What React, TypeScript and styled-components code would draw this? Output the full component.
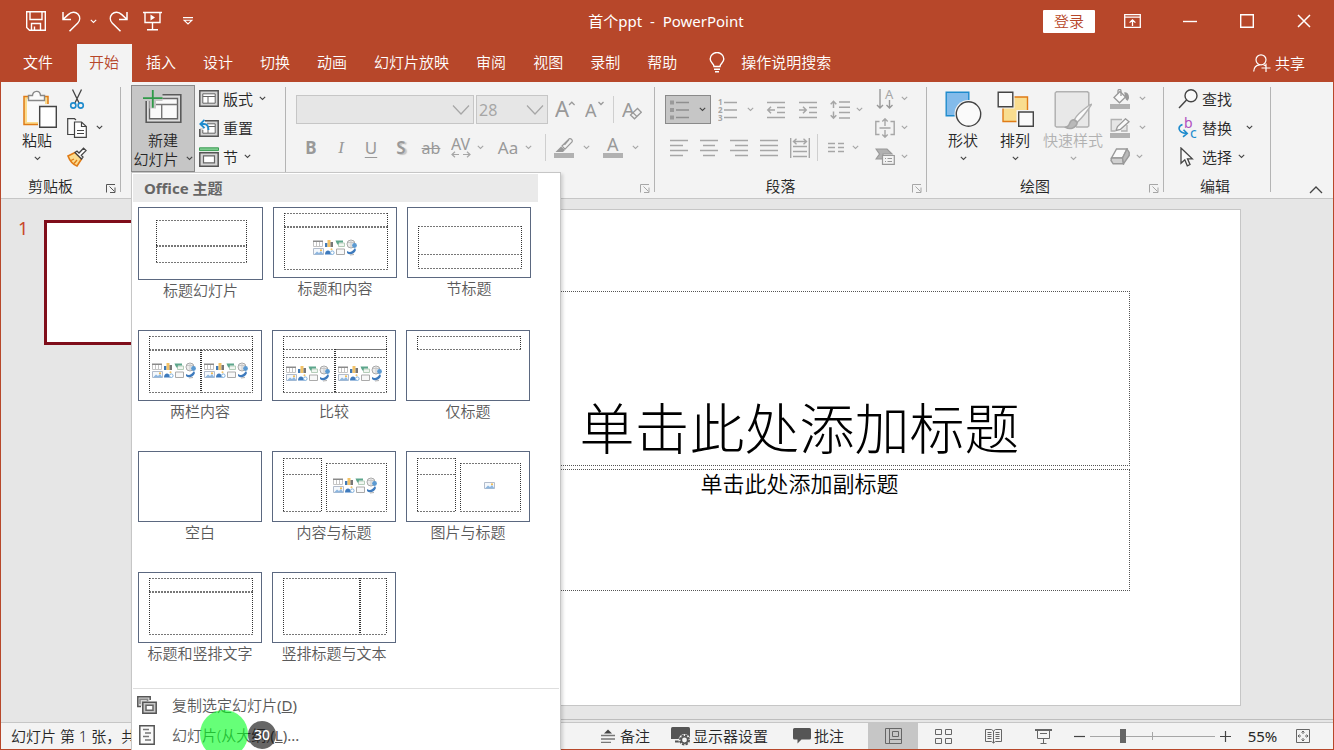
import React from "react";
import styled, { createGlobalStyle, css } from "styled-components";

const c = {
  brand: "#b7472a",
  brandDark: "#7f0d1a",
  ribbon: "#f3f3f3",
  canvas: "#e6e6e6",
  line: "#c6c6c6",
  text: "#262626",
  menuText: "#5a5a5a",
  icon: "#444444",
  off: "#a6a6a6",
  offText: "#b1b1b1",
  blue: "#1e8bcd",
  orange: "#e07b16",
};

const GlobalStyle = createGlobalStyle`
  *, *::before, *::after { box-sizing: border-box; }
  body {
    margin: 0;
    font: 15px/20px "Noto Sans", "Noto Sans CJK SC", sans-serif;
    font-weight: 350;
    color: ${c.text};
  }
  button, select, input {
    font: inherit;
    color: inherit;
    margin: 0;
    padding: 0;
    border: 0;
    background: none;
  }
  svg { display: block; flex: none; font-weight: 400; }
`;

const Window = styled.div`
  height: 100vh;
  display: flex;
  flex-direction: column;
  overflow: hidden;
  background: ${c.brand};
`;

/* ---------- title bar ---------- */

const TitleBar = styled.header`
  display: grid;
  grid-template-columns: 1fr auto 1fr;
  align-items: center;
  height: 42px;
  flex: none;
  padding-right: 2px;
  color: #fff;
`;

const QuickAccess = styled.div`
  display: flex;
  align-items: center;
  padding-left: 26px;
`;

const QuickButton = styled.button<{ $after: number }>`
  display: flex;
  margin-right: ${(p) => p.$after}px;
`;

const DocumentTitle = styled.div`
  white-space: pre;
  font-weight: 400;
`;

const WindowControls = styled.div`
  display: flex;
  justify-content: flex-end;
  align-items: center;
`;

const LoginButton = styled.button`
  width: 52px;
  height: 23px;
  margin-right: 9px;
  border-radius: 1px;
  background: #fff;
  color: ${c.brand};
`;

const WindowButton = styled.button`
  display: flex;
  align-items: center;
  justify-content: center;
  width: 57px;
  height: 40px;
`;

/* ---------- tabs ---------- */

const TabBar = styled.nav`
  display: flex;
  align-items: flex-end;
  height: 40px;
  flex: none;
  padding: 0 29px 0 11px;
  gap: 2px;
  color: #fff;
`;

const Tab = styled.button<{ $active?: boolean; $file?: boolean }>`
  height: 38px;
  padding: 0 13px 2px 12px;
  white-space: nowrap;
  ${(p) => p.$file && css`margin-right: 9px;`}
  ${(p) => p.$active && css`background: ${c.ribbon}; color: ${c.brand};`}
`;

const TellMe = styled.button`
  display: flex;
  align-items: center;
  gap: 16px;
  height: 38px;
  margin-left: 17px;
  padding-bottom: 2px;
  white-space: nowrap;
`;

const Share = styled.button`
  display: flex;
  align-items: center;
  gap: 4px;
  height: 38px;
  margin-left: auto;
`;

/* ---------- ribbon ---------- */

const Ribbon = styled.section`
  display: flex;
  flex: none;
  margin: 0 1px;
  height: 117px;
  border-bottom: 1px solid ${c.line};
  background: ${c.ribbon};
`;

const Group = styled.div<{ $width: number }>`
  display: flex;
  flex-direction: column;
  flex: none;
  width: ${(p) => p.$width}px;
  padding-top: 3px;
`;

const GroupBody = styled.div<{ $start: number; $gap?: number }>`
  display: flex;
  gap: ${(p) => p.$gap ?? 0}px;
  height: 90px;
  padding-left: ${(p) => p.$start}px;
`;

const GroupFooter = styled.div`
  display: flex;
  align-items: center;
  gap: 6px;
  height: 22px;
  padding-right: 4px;
`;

const GroupName = styled.span`
  flex: 1;
  text-align: center;
`;

const Launcher = styled.button`
  display: flex;
  padding-top: 4px;
`;

const GroupDivider = styled.div`
  width: 1px;
  flex: none;
  margin: 5px 0 6px;
  background: #b4b4b4;
`;

const BigButton = styled.button<{ $width: number; $pressed?: boolean; $off?: boolean }>`
  display: flex;
  flex-direction: column;
  align-items: center;
  width: ${(p) => p.$width}px;
  height: 87px;
  padding-top: 4px;
  border: 1px solid ${(p) => (p.$pressed ? "#8a8a8a" : "transparent")};
  background: ${(p) => (p.$pressed ? "#c6c6c6" : "none")};
  color: ${(p) => (p.$off ? c.offText : c.text)};
  white-space: nowrap;
`;

const BigButtonLine = styled.span`
  display: flex;
  align-items: center;
  justify-content: center;
  gap: 7px;
  height: 19px;
`;

const SmallColumn = styled.div`
  display: flex;
  flex-direction: column;
  align-items: flex-start;
  margin-top: -1px;
`;

const SmallButton = styled.button<{ $gap?: number }>`
  display: flex;
  align-items: center;
  gap: ${(p) => p.$gap ?? 6}px;
  height: 29px;
  white-space: nowrap;
`;

const SmallCaption = styled.span`
  display: flex;
  align-items: center;
  gap: 4px;
`;

const ToolRows = styled.div`
  display: flex;
  flex-direction: column;
  gap: 9px;
  padding-top: 10px;
`;

const ToolRow = styled.div<{ $gap?: number }>`
  display: flex;
  align-items: center;
  height: 29px;
  gap: ${(p) => p.$gap ?? 0}px;
`;

const ToolDivider = styled.div<{ $before: number }>`
  width: 1px;
  height: 27px;
  margin: 0 3px 0 ${(p) => p.$before}px;
  background: #cfcfcf;
`;

const ToolButton = styled.button<{ $gap?: number; $pressed?: boolean }>`
  display: flex;
  align-items: center;
  justify-content: center;
  gap: ${(p) => p.$gap ?? 6}px;
  height: 29px;
  padding: 0 4px;
  border: 1px solid ${(p) => (p.$pressed ? "#8a8a8a" : "transparent")};
  background: ${(p) => (p.$pressed ? "#c6c6c6" : "none")};
`;

const Glyph = styled.span<{ $kind?: "bold" | "italic" | "underline" | "shadow" | "strike" }>`
  width: ${(p) => (p.$kind ? 20 : 28)}px;
  text-align: center;
  font-size: 17px;
  font-weight: 400;
  color: #999;
  ${(p) => p.$kind === "bold" && css`font-weight: 700;`}
  ${(p) => p.$kind === "italic" && css`font-family: "Liberation Serif", serif; font-style: italic;`}
  ${(p) => p.$kind === "underline" && css`text-decoration: underline; text-underline-offset: 3px;`}
  ${(p) => p.$kind === "shadow" && css`font-weight: 600; text-shadow: 2px 1px 1px #c4c4c4;`}
  ${(p) => p.$kind === "strike" && css`font-size: 16px; text-decoration: line-through;`}
`;

const Combo = styled.label<{ $width: number }>`
  display: grid;
  align-items: center;
  width: ${(p) => p.$width}px;
  height: 29px;
  margin-right: 2px;
  & > * { grid-area: 1 / 1; }
  & > svg { justify-self: end; margin-right: 4px; pointer-events: none; }
`;

const ComboSelect = styled.select`
  appearance: none;
  width: 100%;
  height: 29px;
  padding-left: 2px;
  border: 1px solid ${c.line};
  background: ${c.canvas};
  color: ${c.off};
  font-size: 16px;
  font-weight: 400;
  opacity: 1;
`;

const CollapseButton = styled.button`
  display: flex;
  align-self: flex-end;
  margin-left: auto;
  padding: 4px 10px 4px;
`;

/* ---------- new slide menu ---------- */

const MenuAnchor = styled.div`
  position: relative;
  margin-right: 4px;
`;

const Menu = styled.div`
  position: absolute;
  z-index: 10;
  top: 87px;
  left: 0;
  width: 430px;
  padding: 1px;
  border: 1px solid ${c.line};
  background: #fff;
  box-shadow: 2px 2px 3px rgba(0, 0, 0, 0.15);
  color: ${c.menuText};
`;

const MenuHeading = styled.h2`
  width: 405px;
  margin: 0 0 5px;
  padding-left: 11px;
  font-size: 15px;
  line-height: 28px;
  font-weight: 700;
  background: #eaeaea;
  color: #666;
`;

const LayoutRows = styled.div`
  display: flex;
  flex-direction: column;
  gap: 30px;
  padding: 0 5px 25px;
`;

const LayoutRow = styled.div`
  display: flex;
  gap: 10px;
`;

const LayoutOption = styled.button`
  display: flex;
  flex-direction: column;
  align-items: center;
  color: ${c.menuText};
`;

const LayoutPreview = styled.span<{ $first?: boolean }>`
  width: ${(p) => (p.$first ? 125 : 124)}px;
  height: ${(p) => (p.$first ? 73 : 71)}px;
  border: 1px solid #5b6880;
  background: #fff;
`;

const MenuItem = styled.button`
  display: flex;
  align-items: center;
  gap: 15px;
  width: 100%;
  height: 30px;
  padding-left: 4px;
  text-align: left;
  color: ${c.menuText};
`;

const Latin = styled.span`
  font-weight: 400;
`;

const MenuRule = styled.hr`
  height: 1px;
  margin: 0 0 1px;
  border: 0;
  background: #dedede;
`;

const ClickHalo = styled.span`
  position: absolute;
  left: 68px;
  top: 537px;
  width: 48px;
  height: 48px;
  border-radius: 50%;
  background: rgba(0, 255, 30, 0.6);
  pointer-events: none;
`;

const Countdown = styled.span`
  position: absolute;
  left: 116px;
  top: 548px;
  width: 28px;
  border-radius: 50%;
  background: rgba(0, 0, 0, 0.6);
  color: #fff;
  font-size: 14px;
  font-weight: 500;
  line-height: 28px;
  text-align: center;
  pointer-events: none;
`;

/* ---------- workspace ---------- */

const Workspace = styled.main`
  display: flex;
  flex: 1;
  min-height: 0;
  margin: 0 1px;
  overflow: hidden;
  background: ${c.canvas};
`;

const ThumbnailPane = styled.aside`
  display: flex;
  gap: 16px;
  flex: none;
  width: 266px;
  padding: 21px 0 0 17px;
`;

const ThumbnailNumber = styled.span`
  width: 10px;
  font-size: 18px;
  line-height: 16px;
  font-weight: 400;
  color: #c8452a;
`;

const Thumbnail = styled.button`
  width: 212px;
  height: 125px;
  border: 3px solid ${c.brandDark};
  background: #fff;
`;

const Stage = styled.div`
  flex: 1;
  margin-bottom: 2px;
  padding: 10px 92px 0 91px;
  border-bottom: 1px solid #bdbdbd;
  overflow: hidden;
`;

const Slide = styled.article`
  display: grid;
  grid-template-rows: 81fr 175fr 3fr 122fr 114fr;
  grid-template-columns: 75%;
  justify-content: center;
  aspect-ratio: 16 / 9;
  border: 1px solid ${c.line};
  background: #fff;
  color: #000;
`;

const TitleHolder = styled.h1`
  grid-row: 2;
  display: flex;
  align-items: flex-end;
  justify-content: center;
  margin: 0;
  border: 1px dotted #555;
  font-size: 55px;
  font-weight: 300;
  line-height: 74px;
  white-space: nowrap;
`;

const SubtitleHolder = styled.p`
  grid-row: 4;
  margin: 0;
  border: 1px dotted #555;
  font-size: 22px;
  line-height: 26px;
  text-align: center;
`;

/* ---------- status bar ---------- */

const StatusBar = styled.footer`
  display: flex;
  align-items: center;
  flex: none;
  height: 27px;
  margin: 0 1px 1px;
  padding: 0 23px 0 10px;
  border-top: 1px solid ${c.line};
  background: ${c.ribbon};
  white-space: nowrap;
`;

const StatusTools = styled.div`
  display: flex;
  align-items: center;
  margin-left: auto;
`;

const StatusButton = styled.button<{ $gap: number; $after: number }>`
  display: flex;
  align-items: center;
  gap: ${(p) => p.$gap}px;
  margin-right: ${(p) => p.$after}px;
`;

const ViewButtons = styled.div`
  display: flex;
  margin-right: 1px;
`;

const ViewButton = styled.button<{ $active?: boolean }>`
  display: flex;
  align-items: center;
  justify-content: center;
  width: 50px;
  height: 26px;
  background: ${(p) => (p.$active ? "#c6c6c6" : "none")};
`;

const ZoomStep = styled.button`
  display: flex;
  padding: 6px 5px;
`;

const ZoomSlider = styled.input`
  appearance: none;
  width: 125px;
  height: 20px;
  background:
    linear-gradient(#a6a6a6, #a6a6a6) center / 1px 8px no-repeat,
    linear-gradient(#a6a6a6, #a6a6a6) center / 100% 1px no-repeat;
  &::-webkit-slider-thumb {
    appearance: none;
    width: 6px;
    height: 14px;
    background: #666;
  }
`;

const ZoomValue = styled.button`
  width: 31px;
  margin: 0 18px 0 11px;
  font-weight: 400;
`;

/* ---------- icons ---------- */

type SvgProps = { w: number; h: number; color?: string; sw?: number; children: React.ReactNode };

const Svg = ({ w, h, color = c.icon, sw = 1, children }: SvgProps) => (
  <svg width={w} height={h} viewBox={`0 0 ${w} ${h}`} fill="none" stroke={color} strokeWidth={sw} aria-hidden="true">
    {children}
  </svg>
);

const Chevron = ({ color = c.icon }: { color?: string }) => (
  <Svg w={7} h={5} color={color} sw={1.1}>
    <path d="M.8 .9 3.5 3.4 6.2 .9" />
  </Svg>
);

const OffChevron = () => <Chevron color={c.off} />;

const LauncherIcon = ({ off }: { off?: boolean }) => (
  <Svg w={10} h={9} color={off ? c.off : "#555"}>
    <path d="M.5 8.5V.5H9M3.5 2.5 8.5 7.5M9 3.5V8.5H4" />
  </Svg>
);

const SaveIcon = () => (
  <Svg w={20} h={20} color="#fff" sw={1.4}>
    <path d="M.7.7H19.3V19.3H3.5L.7 16.5ZM4 .7V8.5H16V.7M5.5 19V12.5H14.5V19M8.5 15.5V19" />
  </Svg>
);

const UndoIcon = () => (
  <Svg w={19} h={21} color="#fff" sw={1.5}>
    <path d="M1 1V8.5H9M1.2 8.2 6.2 3.6C9.5.5 13.5.5 15.9 3.1 18.4 5.8 18.2 9.5 15.6 12.2L7.5 20.2" />
  </Svg>
);

const RedoIcon = () => (
  <Svg w={19} h={21} color="#fff" sw={1.5}>
    <path d="M18 1V8.5H10M17.8 8.2 12.8 3.6C9.5.5 5.5.5 3.1 3.1.6 5.8.8 9.5 3.4 12.2L11.5 20.2" />
  </Svg>
);

const PresentIcon = () => (
  <Svg w={19} h={20} color="#fff" sw={1.4}>
    <path d="M0 1.5H19M2 1.5V11.5H17V1.5M9.5 11.5V18.5M4 18.7H15" />
    <path d="M7.5 3.5 12 6.5 7.5 9.5Z" fill="#fff" stroke="none" />
  </Svg>
);

const CustomizeIcon = () => (
  <Svg w={10} h={8} color="#fff" sw={1.1}>
    <path d="M0 .6H10M1 3.2H9L5 7Z" />
  </Svg>
);

const RibbonModeIcon = () => (
  <Svg w={17} h={14} color="#fff" sw={1.3}>
    <path d="M.7.7H16.3V13.3H.7ZM.7 3.2H16.3M8.5 12V6M5.6 8.6 8.5 5.8 11.4 8.6" />
  </Svg>
);

const BulbIcon = () => (
  <Svg w={16} h={21} color="#fff" sw={1.4}>
    <path d="M5 14.5C5 11.5 1.2 10.8 1.2 7A6.6 6.3 0 0 1 14.8 7C14.8 10.8 11 11.5 11 14.5ZM5 17.2H11M6 19.8H10" />
  </Svg>
);

const ShareIcon = () => (
  <Svg w={18} h={18} color="#fff" sw={1.2}>
    <circle cx="8" cy="5.8" r="5" />
    <path d="M.7 17.5C.9 13.3 3.5 11 6.8 10.8M10.5 10.8C11.5 11 12 11.3 12.5 12M8.5 14H17.5M13 9.5V18" />
  </Svg>
);

const PasteIcon = () => (
  <Svg w={40} h={40}>
    <path d="M7 6.5H31V34.5H7Z" fill="#fbdc8e" stroke={c.orange} strokeWidth="1.5" />
    <path d="M10 9H28V32H10Z" fill="#fafafa" stroke="none" />
    <path d="M11.5 10.5V5.5H15.5C16 .5 23-.5 23.5 5.5H27.5V10.5Z" fill="#fafafa" stroke="#888" strokeWidth="1.4" />
    <path d="M21 14H40V38H21Z" fill="#f3f3f3" stroke="none" />
    <path d="M22.7 16.5H39.3V37.3H22.7Z" fill="#fff" strokeWidth="1.4" />
  </Svg>
);

const CutIcon = () => (
  <Svg w={20} h={20} sw={1.3}>
    <path d="M5.5.5 12.3 14.5M14.5.5 7.7 14.5" />
    <circle cx="6.3" cy="16.5" r="2.6" stroke={c.blue} strokeWidth="1.6" />
    <circle cx="13.7" cy="16.5" r="2.6" stroke={c.blue} strokeWidth="1.6" />
  </Svg>
);

const CopyIcon = () => (
  <Svg w={20} h={20} sw={1.2}>
    <path d="M7 16.5H.7V.7H7.5L9 2" fill="#fafafa" />
    <path d="M7.5 4H14.5L19.3 8.5V19.3H7.5Z" fill="#fff" />
    <path d="M14.5 4V8.5H19.3M10 12.5H17M10 15.5H17" />
  </Svg>
);

const BrushIcon = () => (
  <Svg w={20} h={20} sw={1.3}>
    <path d="M1 9 8 5.5 14.5 12 10 19C6 17.5 3 14.5 1 9Z" fill="#fbdc8e" stroke={c.orange} strokeWidth="1.6" />
    <path d="M4 13.5 7 12M7 16.5 10 13" stroke={c.orange} />
    <path d="M8 5.5 10 4 12 6 16.5 1.2 19 3.6 14.3 8.2 16 10 14.5 12Z" fill="#fff" />
  </Svg>
);

const NewSlideIcon = () => (
  <Svg w={40} h={40}>
    <path d="M3.2 4.7H37.8V32.3H3.2Z" fill="#dcdcdc" stroke="#5a5a5a" strokeWidth="1.6" />
    <path d="M6.5 8.5H34.5V28.8H6.5Z" fill="#fafafa" stroke="#666" strokeWidth="1.4" />
    <path d="M6.5 14.5H34.5M18.7 14.5V28.5" stroke="#777" strokeWidth="1.4" />
    <path d="M0 3.5H19.5V11H0ZM6.5 0H13V18.5H6.5Z" fill="#c6c6c6" stroke="none" />
    <path d="M0 8.2H19.5M9.8 0V17.8" stroke="#2f9a48" strokeWidth="1.8" />
  </Svg>
);

const LayoutIcon = () => (
  <Svg w={20} h={17}>
    <path d="M.8.8H19.2V16.2H.8Z" fill="#d4d4d4" stroke="#555" strokeWidth="1.5" />
    <path d="M3.8 3.8H16.2V13.2H3.8ZM3.8 6.5H16.2M9 6.5V13" fill="#fff" stroke="#666" />
  </Svg>
);

const ResetIcon = () => (
  <Svg w={20} h={18}>
    <path d="M5 1.8H19.2V17.2H.8V10" fill="#d4d4d4" stroke="#555" strokeWidth="1.5" />
    <path d="M8 4.8H16.2V14.2H3.8V11M9 7.5H16.2M9 7.5V14" fill="#fff" stroke="#666" />
    <path d="M0 0H6V3H8V9H0Z" fill={c.ribbon} stroke="none" />
    <path d="M5.5.8 1.3 5 5.5 9.2M1.5 5H5C8 5 9.5 7 9.5 11" stroke={c.blue} strokeWidth="1.8" />
  </Svg>
);

const SectionIcon = () => (
  <Svg w={20} h={20}>
    <path d="M.5.8H19.5V3.6H.5Z" fill="#7ccb8e" stroke="#3d9d55" />
    <path d="M.8 5.8H19.2V19.2H.8Z" fill="#d4d4d4" stroke="#555" strokeWidth="1.5" />
    <path d="M4.5 8.8H15.5V15.8H4.5Z" fill="#fff" stroke="#666" strokeWidth="1.2" />
  </Svg>
);

const LetterIcon = ({ size, children }: { size: number; children: React.ReactNode }) => (
  <Svg w={20} h={22} color="#999" sw={1.3}>
    <text x="0" y="18" fontSize={size} fill="#999" stroke="none">A</text>
    {children}
  </Svg>
);

const SpacingIcon = () => (
  <Svg w={20} h={20} color={c.off} sw={1.2}>
    <text x="0" y="12" fontSize="16" fill="#999" stroke="none">AV</text>
    <path d="M1 16.5H8M4 13.8 1 16.5 4 19.2M12 16.5H19M16 13.8 19 16.5 16 19.2" />
  </Svg>
);

const HighlightIcon = () => (
  <Svg w={20} h={20} color="#999" sw={1.2}>
    <path d="M8 8 15 .9C17 .2 19 2 18 4L11 11.2ZM15 1.5 10.5 6.8" fill="#f3f3f3" />
    <path d="M7 8.5 11 12 9 14H1.5Z" fill="#999" stroke="none" />
    <path d="M0 15H20V20H0Z" fill="#b1b1b1" stroke="none" />
  </Svg>
);

const FontColorIcon = () => (
  <Svg w={20} h={20}>
    <text x="4" y="13" fontSize="18" fill="#999" stroke="none">A</text>
    <path d="M0 15H20V20H0Z" fill="#b1b1b1" stroke="none" />
  </Svg>
);

const BulletsIcon = () => (
  <Svg w={20} h={20} color="#8f8f8f" sw={1.6}>
    <path d="M6 2.5H19M6 10H19M6 17.5H19" />
    <path d="M0 .5H4V4.5H0ZM0 8H4V12H0ZM0 15.5H4V19.5H0Z" fill="#9a9a9a" stroke="none" />
  </Svg>
);

const NumbersIcon = () => (
  <Svg w={20} h={22} color={c.off} sw={1.5}>
    <path d="M6 3.5H19M6 11H19M6 18.5H19" />
    <g fontSize="8" fontWeight="700" fill={c.off} stroke="none">
      <text x="0" y="6">1</text>
      <text x="0" y="14">2</text>
      <text x="0" y="22">3</text>
    </g>
  </Svg>
);

const IndentIcon = ({ increase }: { increase?: boolean }) => (
  <Svg w={20} h={18} color={c.off} sw={1.5}>
    <path d="M1 1.5H19M11 6.5H19M11 11.5H19M1 16.5H19" />
    <path d={increase ? "M1 9H8M5 5.8 8.2 9 5 12.2" : "M2 9H9M5 5.8 1.8 9 5 12.2"} />
  </Svg>
);

const LineSpacingIcon = () => (
  <Svg w={20} h={20} color={c.off} sw={1.5}>
    <path d="M9 2H20M9 7.3H20M9 12.6H20M9 18H20M3.5 1.5V8M.7 4.2 3.5 1.3 6.3 4.2M3.5 11.5V18M.7 15.3 3.5 18.2 6.3 15.3" />
  </Svg>
);

const AlignIcon = ({ d }: { d: string }) => (
  <Svg w={20} h={18} color={c.off} sw={1.5}>
    <path d={d} />
  </Svg>
);

const DistributeIcon = () => (
  <Svg w={20} h={20} color={c.off} sw={1.4}>
    <path d="M.7 0V20M19.3 0V20M3 8.5H17M3 13.5H17M3 18.5H17M3.5 3.5H16.5M6.5.8 3.5 3.5 6.5 6.2M13.5.8 16.5 3.5 13.5 6.2" />
  </Svg>
);

const ColumnsIcon = () => (
  <Svg w={20} h={12} color={c.off} sw={1.3}>
    <path d="M2 1.5H9M2 5.5H9M2 9.5H9M12 1.5H18M12 5.5H18M12 9.5H18" />
  </Svg>
);

const TextDirectionIcon = () => (
  <Svg w={20} h={20} color="#999" sw={1.4}>
    <path d="M5 0V19M2 16 5 19 8 16M14.5 11V19M11.5 16 14.5 19 17.5 16" />
    <text x="10" y="10" fontSize="13" fill={c.off} stroke="none">A</text>
  </Svg>
);

const AlignTextIcon = () => (
  <Svg w={20} h={20} color={c.off} sw={1.4}>
    <path d="M4.5 3.5H.8V16.5H4.5M15.5 3.5H19.2V16.5H15.5M4.5 10H15.5M10 1V8M7.3 3.5 10 .8 12.7 3.5M10 12V19M7.3 16.5 10 19.2 12.7 16.5" />
  </Svg>
);

const SmartArtIcon = () => (
  <Svg w={20} h={17} color="#999" sw={1.2}>
    <path d="M1 1H12L17 6H8V11H1L4.5 6Z" fill="#b1b1b1" />
    <path d="M7.5 7.5H19.3V16.3H7.5Z" fill="#f3f3f3" />
    <path d="M10 10.5H11M12.5 10.5H17M10 13.5H11M12.5 13.5H17" />
  </Svg>
);

const ShapesIcon = () => (
  <Svg w={38} h={40} sw={1.4}>
    <path d="M2.2 2.2H24.8V25.8H2.2Z" fill="#83bbea" stroke={c.blue} />
    <circle cx="24.5" cy="24" r="14" fill="#f3f3f3" stroke="none" />
    <circle cx="24.5" cy="24" r="12.2" fill="#fafafa" />
  </Svg>
);

const ArrangeIcon = () => (
  <Svg w={38} h={40} sw={1.4}>
    <path d="M7 7H31.5V31.5H7Z" fill="#f9dd8f" stroke={c.orange} />
    <path d="M0 0H18.5V18.5H0ZM20.5 20H38V38H20.5Z" fill="#f3f3f3" stroke="none" />
    <path d="M2.2 2.2H16.8V16.8H2.2ZM22.7 22H37.3V36.3H22.7Z" fill="#fafafa" />
  </Svg>
);

const QuickStylesIcon = () => (
  <Svg w={38} h={40} color="#b1b1b1" sw={1.5}>
    <path d="M12 37H2.5L1.2 36V3L2.5 1.8H33.5L34.8 2.8V36L33.5 37H22" fill="#e8e8e8" />
    <path d="M35.5 15C30 19 22 26 20.5 29.5L23.5 32C28 28 34 20 37.5 14.5Z" fill="#fafafa" />
    <path d="M20 29.8C16 29.5 16 33.5 14.5 35.5 13.5 37 12 37 11.5 37.3 15 39.5 22 39 23.3 32.5Z" fill="#b9b9b9" stroke="#a6a6a6" />
  </Svg>
);

const FillIcon = () => (
  <Svg w={20} h={20} color="#999" sw={1.3}>
    <path d="M4 8.5 10 2.5 15.5 8 9.5 13.8Z" fill="#fafafa" />
    <path d="M8 4.5V2C8-.2 11-.2 11 2V7" />
    <path d="M15 4C18 4 19.5 9 17.5 11 15.5 11 16 8 15 4Z" fill="#999" />
    <path d="M0 15H20V20H0Z" fill="#b1b1b1" stroke="none" />
  </Svg>
);

const OutlineIcon = () => (
  <Svg w={20} h={20} color="#999" sw={1.3}>
    <path d="M12 1.5H1.2V13H5M17 7V13H11" fill="#e6e6e6" stroke="#b1b1b1" />
    <path d="M6 12.5 7.5 8.5 15.5.8 19 3.8 10.5 11.3Z" fill="#fafafa" />
    <path d="M0 15H20V20H0Z" fill="#b1b1b1" stroke="none" />
  </Svg>
);

const EffectsIcon = () => (
  <Svg w={20} h={17} color="#999" sw={1.4}>
    <path d="M6.5 1H17L12.5 10H1.5Z" fill="#fafafa" />
    <path d="M1.5 10H12.5L13.5 15.8H3.2L1 12.5Z" fill="#d0d0d0" />
    <path d="M17 1 19.2 4.5V7.5L13.5 15.8 12.5 10Z" fill="#b9b9b9" />
  </Svg>
);

const FindIcon = () => (
  <Svg w={20} h={20} sw={1.4}>
    <circle cx="13" cy="6.7" r="6" fill="#fafafa" />
    <path d="M8.5 11 1 19" />
  </Svg>
);

const ReplaceIcon = () => (
  <Svg w={20} h={22} color={c.blue} sw={1.6}>
    <text x="6" y="11" fontSize="14" fill="#b04fc0" stroke="none">b</text>
    <text x="12" y="21" fontSize="14" fill={c.blue} stroke="none">c</text>
    <path d="M4.5 7.5C-.5 9.5-.5 15.5 8.5 16.5M5.5 12.8 9.2 16.5 5 19.8" />
  </Svg>
);

const SelectIcon = () => (
  <Svg w={20} h={20} sw={1.3}>
    <path d="M3 1V16.2L6.8 12.8 9.3 18.8 12 17.5 9.5 11.8H14.3Z" fill="#fafafa" />
  </Svg>
);

const DuplicateIcon = () => (
  <Svg w={20} h={18} sw={1.5}>
    <path d="M4 10.5H.8V.8H13.2V4" fill="#d9d9d9" stroke="#555" />
    <path d="M3 8V3.3H10.5V5" stroke="#888" />
    <path d="M5.8 6.3H19.2V17.2H5.8Z" fill="#c8c8c8" stroke="#555" />
    <path d="M9 9.3H16V14.2H9Z" fill="#fff" stroke="#666" />
  </Svg>
);

const OutlinePageIcon = () => (
  <Svg w={20} h={20} sw={1.5}>
    <path d="M2.8.8H17.2V19.2H2.8Z" fill="#fafafa" stroke="#555" />
    <path d="M6 4.5H12M8 8H14M6 11.5H12M8 15H14" stroke="#777" strokeWidth="1.3" />
  </Svg>
);

/* ---------- layout previews ---------- */

/* Each dashed segment is [x1, y1, x2, y2] inside the preview. */
type Segment = [number, number, number, number];

const box = (x1: number, y1: number, x2: number, y2: number): Segment[] => [
  [x1, y1, x2, y1],
  [x1, y2, x2, y2],
  [x1, y1, x1, y2],
  [x2, y1, x2, y2],
];

const PictureMark = ({ x, y }: { x: number; y: number }) => (
  <g transform={`translate(${x} ${y})`}>
    <path d="M.5.5H10.5V6.5H.5Z" fill="#f4f8fc" stroke="#b3bccb" />
    <path d="M1 6.5 4 3.5 6 5 8 3 10.5 6.5Z" fill="#8db6df" stroke="none" />
    <circle cx="8" cy="2.2" r="1" fill="#f1b544" stroke="none" />
  </g>
);

const ContentMarks = ({ x, y }: { x: number; y: number }) => (
  <g transform={`translate(${x} ${y})`}>
    <path d="M.5 1.5H9.5V6.5H.5ZM3.5 1.5V6.5M6.5 1.5V6.5" stroke="#c4c4c4" fill="#fff" />
    <path d="M0 .5H10V2H0Z" fill="#8a8a8a" stroke="none" />
    <path d="M12 3H14.5V7H12Z" fill="#4079b5" stroke="none" />
    <path d="M14.5 0H17.5V7H14.5Z" fill="#f3c368" stroke="none" />
    <path d="M17.5 2H20V7H17.5Z" fill="#777" stroke="none" />
    <path d="M25.5 3H31.5V6.5H25.5Z" fill="#f1f6f1" stroke="#b5cdb9" />
    <path d="M22.5.5H30V2.5H26L25 5 23.5 3Z" fill="#5da68c" stroke="none" />
    <circle cx="38" cy="4" r="4" fill="#eeeeee" stroke="#a8a8a8" />
    <path d="M35 2.5H41M38 0V7" stroke="#c8c8c8" />
    <circle cx="41.5" cy="5.5" r="2.4" fill="#5b9ad2" stroke="none" />
    <PictureMark x={0} y={8} />
    <path d="M12 14.5C12 11 15 9.5 17 11.5L18.5 14.5Z" fill="#3f7bbd" stroke="none" />
    <circle cx="19.3" cy="12.7" r="1.8" fill="#fff" stroke="#7fb0dd" />
    <circle cx="18.5" cy="9.3" r="1" fill="#f3c368" stroke="none" />
    <path d="M23.5 9H31.5V14.5H23.5Z" fill="#f8f8f8" stroke="#aaaaaa" />
    <path d="M34 11C37 13 39 12 42 8L43 10C41 15 36 15 34 13Z" fill="#3f7bbd" stroke="none" />
    <path d="M37 15 41 14.5" stroke="#b0b0b0" />
  </g>
);

type LayoutSpec = { name: string; lines: Segment[]; marks?: [number, number][]; picture?: [number, number] };

const layoutRows: LayoutSpec[][] = [
  [
    { name: "标题幻灯片", lines: [...box(17, 12, 107, 38), ...box(17, 37, 107, 54)] },
    { name: "标题和内容", lines: [...box(10, 5, 113, 18), ...box(10, 19, 113, 61)], marks: [[39, 32]] },
    { name: "节标题", lines: [...box(10, 18, 113, 46), ...box(10, 46, 113, 60)] },
  ],
  [
    {
      name: "两栏内容",
      lines: [...box(10, 5, 113, 18), ...box(10, 19, 61, 61), ...box(62, 19, 113, 61)],
      marks: [[13, 32], [65, 32]],
    },
    {
      name: "比较",
      lines: [...box(10, 5, 113, 18), ...box(10, 18, 61, 26), ...box(62, 18, 113, 26), ...box(10, 26, 61, 61), ...box(62, 26, 113, 61)],
      marks: [[13, 35], [65, 35]],
    },
    { name: "仅标题", lines: box(10, 5, 113, 18) },
  ],
  [
    { name: "空白", lines: [] },
    { name: "内容与标题", lines: [...box(10, 6, 48, 22), ...box(10, 22, 48, 59), ...box(53, 11, 113, 59)], marks: [[60, 26]] },
    { name: "图片与标题", lines: [...box(10, 6, 48, 22), ...box(10, 22, 48, 59), ...box(53, 11, 113, 59)], picture: [77, 30] },
  ],
  [
    { name: "标题和竖排文字", lines: [...box(10, 5, 113, 18), ...box(10, 19, 113, 61)] },
    { name: "竖排标题与文本", lines: [...box(10, 5, 86, 61), ...box(87, 5, 113, 61)] },
  ],
];

const Preview = ({ spec }: { spec: LayoutSpec }) => (
  <Svg w={122} h={69} color="#555">
    {spec.lines.map(([x1, y1, x2, y2], i) => (
      <line
        key={i}
        x1={x1 + (x1 === x2 ? 0.5 : 0)}
        x2={x2 + (x1 === x2 ? 0.5 : 1)}
        y1={y1 + (y1 === y2 ? 0.5 : 0)}
        y2={y2 + (y1 === y2 ? 0.5 : 0)}
        strokeDasharray={x1 === x2 ? "1 1" : "2 1"}
        stroke={y1 === y2 ? "#777" : "#333"}
      />
    ))}
    {spec.marks?.map(([x, y]) => <ContentMarks key={x} x={x} y={y} />)}
    {spec.picture && <PictureMark x={spec.picture[0]} y={spec.picture[1]} />}
  </Svg>
);

const NewSlideMenu = () => (
  <Menu role="menu">
    <MenuHeading>Office 主题</MenuHeading>
    <LayoutRows>
      {layoutRows.map((row, r) => (
        <LayoutRow key={r}>
          {row.map((spec, i) => (
            <LayoutOption key={spec.name}>
              <LayoutPreview $first={r === 0 && i === 0}>
                <Preview spec={spec} />
              </LayoutPreview>
              {spec.name}
            </LayoutOption>
          ))}
        </LayoutRow>
      ))}
    </LayoutRows>
    <MenuRule />
    <MenuItem>
      <DuplicateIcon />
      <span>复制选定幻灯片<Latin>(<u>D</u>)</Latin></span>
    </MenuItem>
    <MenuItem>
      <OutlinePageIcon />
      <span>幻灯片(从大纲)<Latin>(<u>L</u>)...</Latin></span>
    </MenuItem>
    <ClickHalo />
    <Countdown>30</Countdown>
  </Menu>
);

/* ---------- ribbon groups ---------- */

const Footer = ({ name, launcher, off }: { name: string; launcher?: boolean; off?: boolean }) => (
  <GroupFooter>
    <GroupName>{name}</GroupName>
    {launcher && (
      <Launcher aria-label={`${name}选项`}>
        <LauncherIcon off={off} />
      </Launcher>
    )}
  </GroupFooter>
);

const ClipboardGroup = () => (
  <Group $width={119}>
    <GroupBody $start={8} $gap={2}>
      <BigButton $width={56}>
        <PasteIcon />
        <BigButtonLine>粘贴</BigButtonLine>
        <BigButtonLine><Chevron /></BigButtonLine>
      </BigButton>
      <SmallColumn>
        <SmallButton aria-label="剪切"><CutIcon /></SmallButton>
        <SmallButton aria-label="复制" $gap={9}><CopyIcon /><Chevron /></SmallButton>
        <SmallButton aria-label="格式刷"><BrushIcon /></SmallButton>
      </SmallColumn>
    </GroupBody>
    <Footer name="剪贴板" launcher />
  </Group>
);

const SlidesGroup = () => (
  <Group $width={164}>
    <GroupBody $start={10}>
      <MenuAnchor>
        <BigButton $width={64} $pressed aria-haspopup="menu" aria-expanded>
          <NewSlideIcon />
          <BigButtonLine>新建</BigButtonLine>
          <BigButtonLine>幻灯片<Chevron /></BigButtonLine>
        </BigButton>
        <NewSlideMenu />
      </MenuAnchor>
      <SmallColumn>
        <SmallButton><SmallCaption><LayoutIcon />版式</SmallCaption><Chevron /></SmallButton>
        <SmallButton><SmallCaption><ResetIcon />重置</SmallCaption></SmallButton>
        <SmallButton><SmallCaption><SectionIcon />节</SmallCaption><Chevron /></SmallButton>
      </SmallColumn>
    </GroupBody>
  </Group>
);

const ComboArrow = () => (
  <Svg w={18} h={12} color={c.off} sw={1.2}>
    <path d="M1 1.5 9 10 17 1.5" />
  </Svg>
);

const FontGroup = () => (
  <Group $width={368}>
    <GroupBody $start={10}>
      <ToolRows>
        <ToolRow>
          <Combo $width={178}>
            <ComboSelect aria-label="字体" disabled><option></option></ComboSelect>
            <ComboArrow />
          </Combo>
          <Combo $width={72}>
            <ComboSelect aria-label="字号" disabled><option>28</option></ComboSelect>
            <ComboArrow />
          </Combo>
          <ToolButton aria-label="增大字号">
            <LetterIcon size={22}><path d="M14 6 16.8 3.2 19.6 6" /></LetterIcon>
          </ToolButton>
          <ToolButton aria-label="减小字号">
            <LetterIcon size={18}><path d="M13.5 3 16 5.5 18.5 3" /></LetterIcon>
          </ToolButton>
          <ToolDivider $before={3} />
          <ToolButton aria-label="清除格式">
            <LetterIcon size={20}>
              <path d="M8.5 16 15.5 9.5 19.3 13.2 12.5 19.8Z M11 13.8 14.8 17.4" fill="#f3f3f3" />
            </LetterIcon>
          </ToolButton>
        </ToolRow>
        <ToolRow>
          <ToolButton aria-label="加粗"><Glyph $kind="bold">B</Glyph></ToolButton>
          <ToolButton aria-label="倾斜"><Glyph $kind="italic">I</Glyph></ToolButton>
          <ToolButton aria-label="下划线"><Glyph $kind="underline">U</Glyph></ToolButton>
          <ToolButton aria-label="阴影"><Glyph $kind="shadow">S</Glyph></ToolButton>
          <ToolButton aria-label="删除线"><Glyph $kind="strike">ab</Glyph></ToolButton>
          <ToolButton aria-label="字符间距"><SpacingIcon /><OffChevron /></ToolButton>
          <ToolButton aria-label="更改大小写" $gap={3}><Glyph>Aa</Glyph><OffChevron /></ToolButton>
          <ToolDivider $before={8} />
          <ToolRow $gap={3}>
            <ToolButton aria-label="突出显示" $gap={9}><HighlightIcon /><OffChevron /></ToolButton>
            <ToolButton aria-label="字体颜色" $gap={9}><FontColorIcon /><OffChevron /></ToolButton>
          </ToolRow>
        </ToolRow>
      </ToolRows>
    </GroupBody>
    <Footer name="" launcher off />
  </Group>
);

const ParagraphGroup = () => (
  <Group $width={271}>
    <GroupBody $start={10} $gap={2}>
      <ToolRows>
        <ToolRow $gap={2}>
          <ToolButton aria-label="项目符号" $gap={9} $pressed><BulletsIcon /><Chevron /></ToolButton>
          <ToolButton aria-label="编号" $gap={9}><NumbersIcon /><OffChevron /></ToolButton>
          <ToolButton aria-label="降低列表级别"><IndentIcon /></ToolButton>
          <ToolButton aria-label="提高列表级别"><IndentIcon increase /></ToolButton>
          <ToolButton aria-label="行距"><LineSpacingIcon /><OffChevron /></ToolButton>
        </ToolRow>
        <ToolRow>
          <ToolButton aria-label="左对齐"><AlignIcon d="M0 1.5H18M0 6.5H13M0 11.5H18M0 16.5H13" /></ToolButton>
          <ToolButton aria-label="居中"><AlignIcon d="M0 1.5H18M3 6.5H15M0 11.5H18M3 16.5H15" /></ToolButton>
          <ToolButton aria-label="右对齐"><AlignIcon d="M0 1.5H18M5 6.5H18M0 11.5H18M5 16.5H18" /></ToolButton>
          <ToolButton aria-label="两端对齐"><AlignIcon d="M0 1.5H18M0 6.5H18M0 11.5H18M0 16.5H18" /></ToolButton>
          <ToolButton aria-label="分散对齐"><DistributeIcon /></ToolButton>
          <ToolDivider $before={2} />
          <ToolButton aria-label="分栏"><ColumnsIcon /><OffChevron /></ToolButton>
        </ToolRow>
      </ToolRows>
      <SmallColumn>
        <ToolButton aria-label="文字方向"><TextDirectionIcon /><OffChevron /></ToolButton>
        <ToolButton aria-label="对齐文本"><AlignTextIcon /><OffChevron /></ToolButton>
        <ToolButton aria-label="转换为 SmartArt"><SmartArtIcon /><OffChevron /></ToolButton>
      </SmallColumn>
    </GroupBody>
    <Footer name="段落" launcher off />
  </Group>
);

const DrawingGroup = () => (
  <Group $width={236}>
    <GroupBody $start={10}>
      <BigButton $width={52}>
        <ShapesIcon />
        <BigButtonLine>形状</BigButtonLine>
        <BigButtonLine><Chevron /></BigButtonLine>
      </BigButton>
      <BigButton $width={52}>
        <ArrangeIcon />
        <BigButtonLine>排列</BigButtonLine>
        <BigButtonLine><Chevron /></BigButtonLine>
      </BigButton>
      <BigButton $width={64} $off>
        <QuickStylesIcon />
        <BigButtonLine>快速样式</BigButtonLine>
        <BigButtonLine><OffChevron /></BigButtonLine>
      </BigButton>
      <SmallColumn>
        <ToolButton aria-label="形状填充" $gap={9}><FillIcon /><OffChevron /></ToolButton>
        <ToolButton aria-label="形状轮廓" $gap={9}><OutlineIcon /><OffChevron /></ToolButton>
        <ToolButton aria-label="形状效果"><EffectsIcon /><OffChevron /></ToolButton>
      </SmallColumn>
    </GroupBody>
    <Footer name="绘图" launcher off />
  </Group>
);

const EditingGroup = () => (
  <Group $width={106}>
    <GroupBody $start={14}>
      <SmallColumn>
        <SmallButton><SmallCaption><FindIcon />查找</SmallCaption></SmallButton>
        <SmallButton $gap={14}><SmallCaption><ReplaceIcon />替换</SmallCaption><Chevron /></SmallButton>
        <SmallButton><SmallCaption><SelectIcon />选择</SmallCaption><Chevron /></SmallButton>
      </SmallColumn>
    </GroupBody>
    <Footer name="编辑" />
  </Group>
);

const tabs = ["开始", "插入", "设计", "切换", "动画", "幻灯片放映", "审阅", "视图", "录制", "帮助"];

export default function App() {
  return (
    <Window lang="zh-CN">
      <GlobalStyle />
      <TitleBar>
        <QuickAccess>
          <QuickButton $after={16} aria-label="保存"><SaveIcon /></QuickButton>
          <QuickButton $after={9} aria-label="撤消"><UndoIcon /></QuickButton>
          <QuickButton $after={12} aria-label="撤消列表"><Chevron color="#fff" /></QuickButton>
          <QuickButton $after={15} aria-label="重复"><RedoIcon /></QuickButton>
          <QuickButton $after={21} aria-label="从头开始放映"><PresentIcon /></QuickButton>
          <QuickButton $after={0} aria-label="自定义快速访问工具栏"><CustomizeIcon /></QuickButton>
        </QuickAccess>
        <DocumentTitle>{"首个ppt  -  PowerPoint"}</DocumentTitle>
        <WindowControls>
          <LoginButton>登录</LoginButton>
          <WindowButton aria-label="功能区显示选项"><RibbonModeIcon /></WindowButton>
          <WindowButton aria-label="最小化">
            <Svg w={14} h={14} color="#fff" sw={1.4}><path d="M0 7.5H14" /></Svg>
          </WindowButton>
          <WindowButton aria-label="最大化">
            <Svg w={14} h={14} color="#fff" sw={1.4}><path d="M.7.7H13.3V13.3H.7Z" /></Svg>
          </WindowButton>
          <WindowButton aria-label="关闭">
            <Svg w={14} h={14} color="#fff" sw={1.5}><path d="M1 1 13 13M13 1 1 13" /></Svg>
          </WindowButton>
        </WindowControls>
      </TitleBar>

      <TabBar>
        <Tab $file>文件</Tab>
        {tabs.map((t) => (
          <Tab key={t} $active={t === "开始"}>{t}</Tab>
        ))}
        <TellMe><BulbIcon />操作说明搜索</TellMe>
        <Share><ShareIcon />共享</Share>
      </TabBar>

      <Ribbon>
        <ClipboardGroup />
        <GroupDivider />
        <SlidesGroup />
        <GroupDivider />
        <FontGroup />
        <GroupDivider />
        <ParagraphGroup />
        <GroupDivider />
        <DrawingGroup />
        <GroupDivider />
        <EditingGroup />
        <GroupDivider />
        <CollapseButton aria-label="折叠功能区">
          <Svg w={14} h={8} sw={1.3}><path d="M1 7 7 1 13 7" /></Svg>
        </CollapseButton>
      </Ribbon>

      <Workspace>
        <ThumbnailPane>
          <ThumbnailNumber>1</ThumbnailNumber>
          <Thumbnail aria-label="幻灯片 1" />
        </ThumbnailPane>
        <Stage>
          <Slide>
            <TitleHolder>单击此处添加标题</TitleHolder>
            <SubtitleHolder>单击此处添加副标题</SubtitleHolder>
          </Slide>
        </Stage>
      </Workspace>

      <StatusBar>
        <span>幻灯片 第 1 张，共 1 张</span>
        <StatusTools>
          <StatusButton $gap={5} $after={21}>
            <Svg w={14} h={14} sw={1.3}>
              <path d="M0 6.5H14M0 10H14M0 13.3H10" stroke="#777" />
              <path d="M3 4.5 7 .5 11 4.5Z" fill={c.icon} stroke="none" />
            </Svg>
            备注
          </StatusButton>
          <StatusButton $gap={2} $after={25}>
            <Svg w={20} h={19}>
              <path d="M0 1.5Q0 0 1.5 0H17.5Q19 0 19 1.5V12H0Z" fill="#555" stroke="none" />
              <path d="M4 14.5H8" stroke="#555" strokeWidth="2" />
              <circle cx="13.5" cy="13" r="6" fill="#f3f3f3" stroke="none" />
              <circle cx="13.5" cy="13" r="4.6" stroke="#555" strokeWidth="1.8" strokeDasharray="2.4 1.2" />
              <circle cx="13.5" cy="13" r="3.2" stroke="#555" strokeWidth="1.6" />
            </Svg>
            显示器设置
          </StatusButton>
          <StatusButton $gap={3} $after={24}>
            <Svg w={18} h={16}>
              <path d="M1.5 0H16.5Q18 0 18 1.5V10Q18 11.5 16.5 11.5H8.5L4.5 15.5V11.5H1.5Q0 11.5 0 10V1.5Q0 0 1.5 0Z" fill="#555" stroke="none" />
            </Svg>
            批注
          </StatusButton>
          <ViewButtons>
            <ViewButton $active aria-label="普通视图">
              <Svg w={17} h={16} color="#666">
                <path d="M.5.5H16.5V15.5H.5ZM4.5.5V15.5M4.5 11.5H16.5M7.5 3.5H13.5V8.5H7.5Z" />
              </Svg>
            </ViewButton>
            <ViewButton aria-label="幻灯片浏览">
              <Svg w={17} h={15} color="#666">
                <path d="M.5.5H6.5V5.5H.5ZM10.5.5H16.5V5.5H10.5ZM.5 9.5H6.5V14.5H.5ZM10.5 9.5H16.5V14.5H10.5Z" />
              </Svg>
            </ViewButton>
            <ViewButton aria-label="阅读视图">
              <Svg w={17} h={15} color="#666">
                <path d="M8.5 2 6.5.5H.5V12.5H6.5L8.5 14 10.5 12.5H16.5V.5H10.5ZM8.5 2V14M2.5 3.5H6.5M2.5 5.5H6.5M2.5 7.5H6.5M2.5 9.5H6.5M10.5 3.5H14.5M10.5 5.5H14.5M10.5 7.5H14.5M10.5 9.5H14.5" />
              </Svg>
            </ViewButton>
            <ViewButton aria-label="幻灯片放映">
              <Svg w={17} h={15} color="#666">
                <path d="M0 1H17" strokeWidth="2" />
                <path d="M2.5 1V9.5H14.5V1M5 4.5H12M8.5 9.5V14M5.5 14.5H11.5" />
              </Svg>
            </ViewButton>
          </ViewButtons>
          <ZoomStep aria-label="缩小">
            <Svg w={11} h={11} sw={1.2}><path d="M0 5.5H11" /></Svg>
          </ZoomStep>
          <ZoomSlider type="range" min={0} max={100} defaultValue={25} aria-label="显示比例" />
          <ZoomStep aria-label="放大">
            <Svg w={11} h={11} sw={1.2}><path d="M0 5.5H11M5.5 0V11" /></Svg>
          </ZoomStep>
          <ZoomValue>55%</ZoomValue>
          <button aria-label="使幻灯片适应当前窗口">
            <Svg w={14} h={14} color="#666">
              <path d="M.5.5H13.5V13.5H.5ZM7 2V5M7 9V12M2 7H5M9 7H12M5.5 3.5 7 2 8.5 3.5M5.5 10.5 7 12 8.5 10.5M3.5 5.5 2 7 3.5 8.5M10.5 5.5 12 7 10.5 8.5" />
            </Svg>
          </button>
        </StatusTools>
      </StatusBar>
    </Window>
  );
}
